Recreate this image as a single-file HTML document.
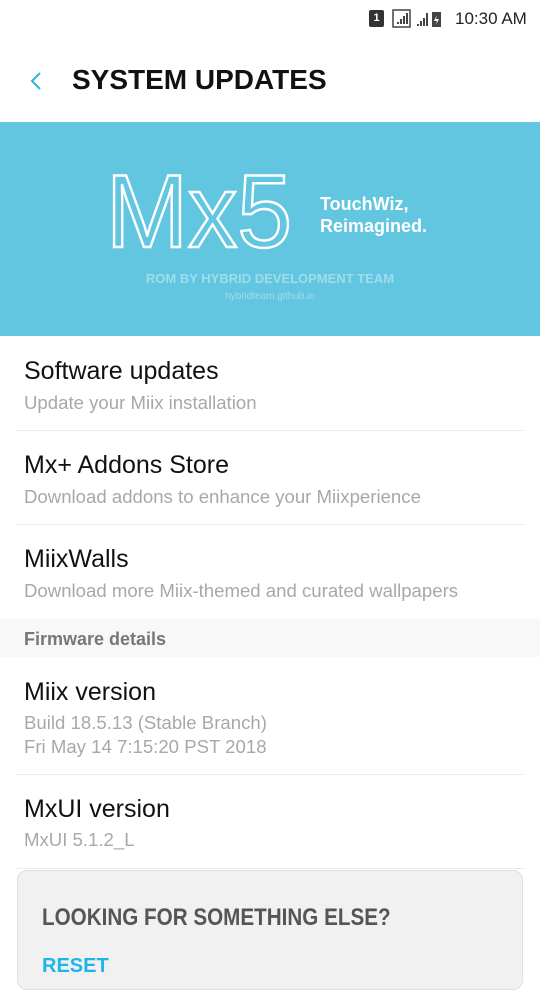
<!DOCTYPE html>
<html><head><meta charset="utf-8"><style>
*{margin:0;padding:0;box-sizing:border-box}
body{width:540px;height:960px;overflow:hidden;background:#fff;font-family:"Liberation Sans",sans-serif;position:relative}
.abs{position:absolute}
.t{position:absolute;left:24px;font-size:25px;color:#111}
.s{position:absolute;left:24px;font-size:18.6px;color:#a8a8a8}
.d{position:absolute;left:16px;right:16px;height:1px;background:#ececec}
</style></head><body>
<div class="abs" style="left:369px;top:10px;width:15px;height:17px;background:#333;border-radius:2px;color:#fff;font-size:11px;font-weight:bold;text-align:center;line-height:17px">1</div>
<svg class="abs" style="left:392px;top:9px" width="60" height="20">
<rect x="1" y="1" width="17" height="17" fill="none" stroke="#444" stroke-width="1.5"/>
<path d="M5 15h2v-2H5zM8 15h2v-5H8zM11 15h2v-8h-2zM14 15h2V4h-2z" fill="#444"/>
<path d="M25 17h2v-2h-2zM28 17h2v-5h-2zM31 17h2v-8h-2zM34 17h2V4h-2z" fill="#444"/>
<rect x="40" y="3" width="9" height="15" fill="#444"/><path d="M45 6l-3 6h3l-1 4 3-6h-3z" fill="#fff"/>
</svg>
<div class="abs" style="left:455px;top:9px;font-size:17px;color:#222">10:30 AM</div>
<svg class="abs" style="left:28px;top:70px" width="16" height="22"><path d="M12 3L4 11l8 8" fill="none" stroke="#2bb7d6" stroke-width="2"/></svg>
<div class="abs" style="left:72px;top:64px;font-size:28px;font-weight:bold;color:#111">SYSTEM UPDATES</div>
<div class="abs" style="left:0;top:122px;width:540px;height:214px;background:#62c6e0">
<svg width="540" height="214" class="abs" style="left:0;top:0">
<text x="106" y="125" font-family="Liberation Sans" font-size="104" fill="none" stroke="#fff" stroke-width="2.5" textLength="186" lengthAdjust="spacingAndGlyphs">Mx5</text>
<text x="320" y="88" font-family="Liberation Sans" font-weight="bold" font-size="18" fill="#fff">TouchWiz,</text>
<text x="320" y="110" font-family="Liberation Sans" font-weight="bold" font-size="18" fill="#fff">Reimagined.</text>
<text x="270" y="161" text-anchor="middle" font-family="Liberation Sans" font-weight="bold" font-size="13" fill="#9fdcec">ROM BY HYBRID DEVELOPMENT TEAM</text>
<text x="270" y="177" text-anchor="middle" font-family="Liberation Sans" font-size="10" fill="#9fdcec">hybridteam.github.io</text>
</svg></div>
<div class="t" style="top:357px">Software updates</div>
<div class="s" style="top:392px">Update your Miix installation</div>
<div class="d" style="top:430px"></div>
<div class="t" style="top:451px">Mx+ Addons Store</div>
<div class="s" style="top:486px">Download addons to enhance your Miixperience</div>
<div class="d" style="top:524px"></div>
<div class="t" style="top:545px">MiixWalls</div>
<div class="s" style="top:580px">Download more Miix-themed and curated wallpapers</div>
<div class="abs" style="left:0;top:619px;width:540px;height:38px;background:#f8f8f8"></div>
<div class="abs" style="left:24px;top:629px;font-size:18px;font-weight:bold;color:#777">Firmware details</div>
<div class="t" style="top:678px">Miix version</div>
<div class="s" style="top:712px">Build 18.5.13 (Stable Branch)</div>
<div class="s" style="top:736px">Fri May 14 7:15:20 PST 2018</div>
<div class="d" style="top:774px"></div>
<div class="t" style="top:795px">MxUI version</div>
<div class="s" style="top:829px">MxUI 5.1.2_L</div>
<div class="d" style="top:868px"></div>
<div class="abs" style="left:17px;top:870px;width:506px;height:120px;background:#f1f1f1;border:1px solid #e0e0e0;border-radius:10px"></div>
<div class="abs" style="left:42px;top:904px;font-size:24px;font-weight:bold;color:#555;transform:scaleX(.86);transform-origin:left">LOOKING FOR SOMETHING ELSE?</div>
<div class="abs" style="left:42px;top:955px;font-size:20px;font-weight:bold;color:#1fb4ea">RESET</div>
</body></html>
